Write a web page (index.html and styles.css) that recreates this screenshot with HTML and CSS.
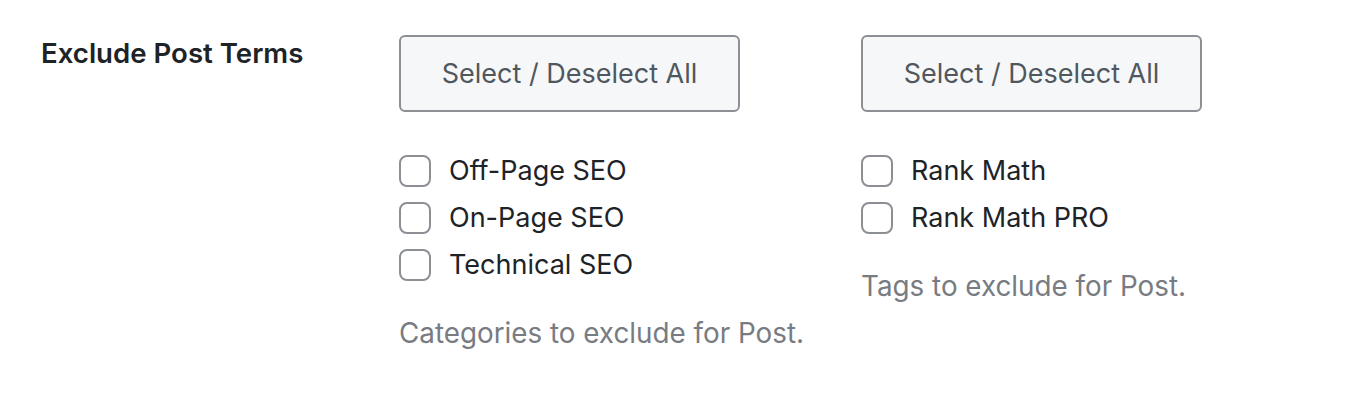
FILE: index.html
```html
<!DOCTYPE html>
<html lang="en">
<head>
    <meta charset="UTF-8">
    <meta name="viewport" content="width=device-width, initial-scale=1.0">
    <title>Exclude Post Terms</title>
    <link rel="stylesheet" href="styles.css">
</head>
<body>

<div class="form-row">
    <div class="form-label">Exclude Post Terms</div>

    <div class="form-field">
        <div class="term-group">
            <button class="toggle-all">Select / Deselect All</button>
            <ul class="term-list">
                <li><label><span class="check"></span>Off-Page SEO</label></li>
                <li><label><span class="check"></span>On-Page SEO</label></li>
                <li><label><span class="check"></span>Technical SEO</label></li>
            </ul>
            <p class="description">Categories to exclude for Post.</p>
        </div>

        <div class="term-group">
            <button class="toggle-all">Select / Deselect All</button>
            <ul class="term-list">
                <li><label><span class="check"></span>Rank Math</label></li>
                <li><label><span class="check"></span>Rank Math PRO</label></li>
            </ul>
            <p class="description">Tags to exclude for Post.</p>
        </div>
    </div>
</div>

</body>
</html>
```

FILE: styles.css
```css
body {
    font-family: Inter, "Noto Sans", sans-serif;
    background-color: #fff;
    color: #1d2327;
    margin: 0;
    padding: 0;
}

.form-row {
    display: flex;
    padding: 35px 0 0 41px;
}

.form-label {
    width: 358px;
    font-size: 27.6px;
    font-weight: 600;
    line-height: 34px;
    margin-top: 1px;
}

.form-field {
    display: flex;
    gap: 121px;
}

.term-group {
    width: 341px;
}

.toggle-all {
    width: 341px;
    height: 77px;
    background-color: #f6f7f8;
    border: 2px solid #8c8f94;
    border-radius: 6px;
    color: #50575e;
    font-family: inherit;
    font-size: 27px;
    cursor: pointer;
}

.term-list {
    list-style: none;
    margin: 35px 0 0;
    padding: 0;
}

.term-list li {
    height: 47px;
}

.term-list label {
    display: flex;
    align-items: center;
    height: 47px;
    gap: 18px;
    font-size: 27px;
}

.check {
    width: 32px;
    height: 32px;
    box-sizing: border-box;
    border: 2px solid #8c8f94;
    border-radius: 8px;
    background: #fff;
}

.description {
    margin: 27px 0 0;
    font-size: 27.8px;
    line-height: 36px;
    color: #787c82;
    white-space: nowrap;
}
```
